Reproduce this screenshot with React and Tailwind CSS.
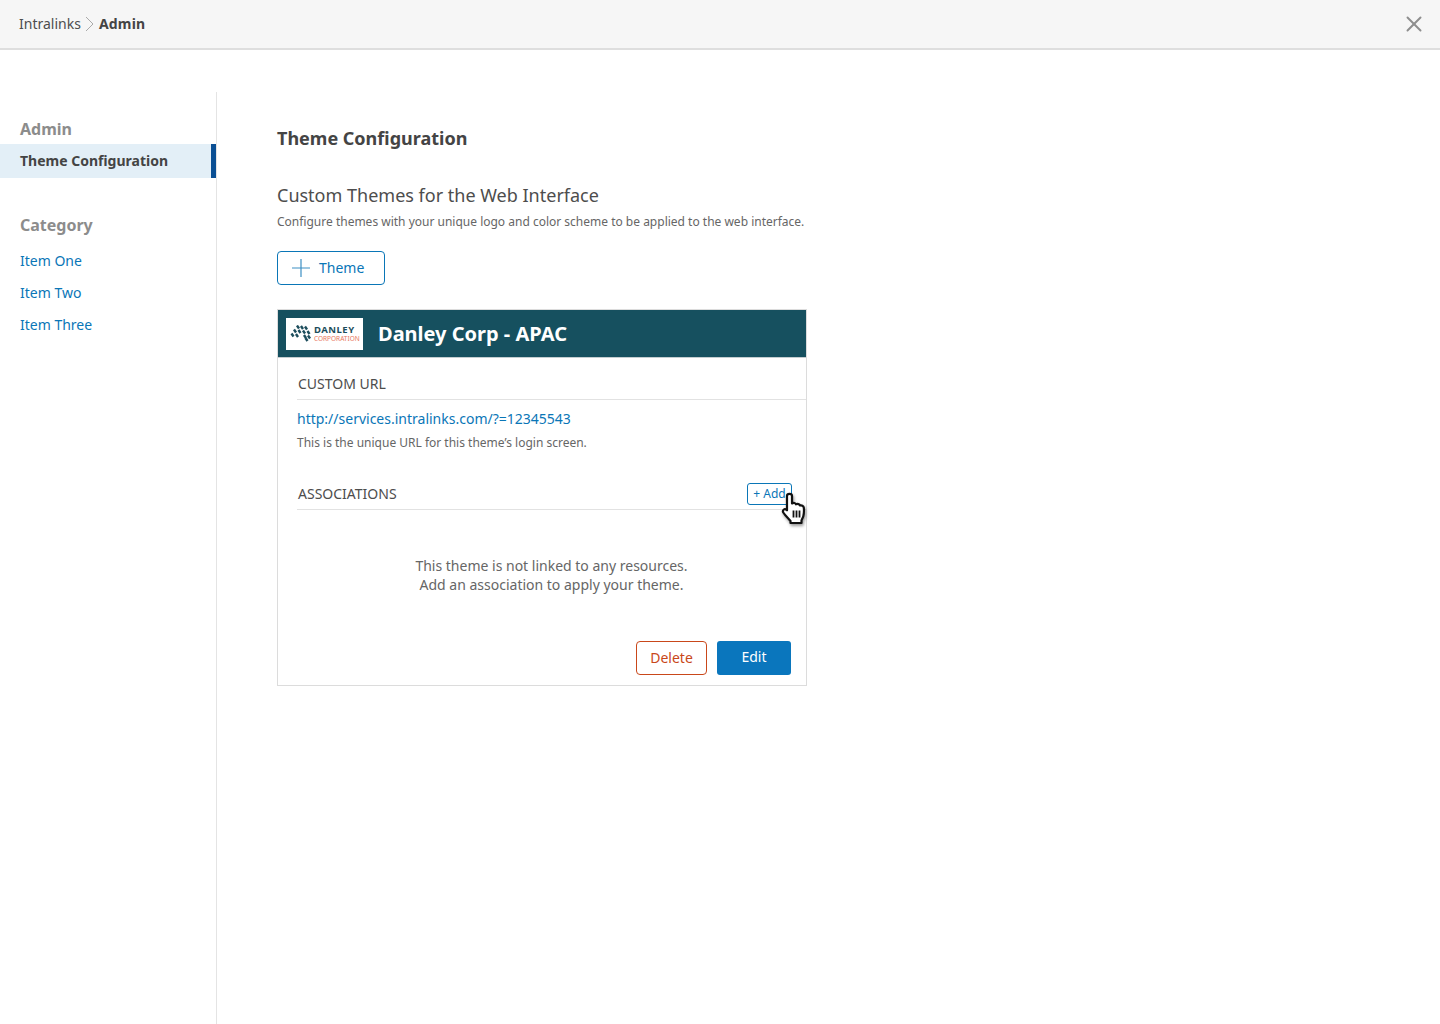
import { X } from "lucide-react";

function HandCursor() {
  return (
    <svg
      className="absolute left-[780px] top-[491px] w-[27px] h-[35px] drop-shadow-[1px_2px_1.5px_rgba(0,0,0,0.4)]"
      viewBox="0 0 27 35"
    >
      <path
        d="M7 5c0-2.800 5-2.800 5 0v7.500c1.500-1 3.500-.6 4 .8 1.500-.8 3.500-.2 4 1.200 1.600-.6 3.600.4 3.800 2.200.3 3 .2 6-.5 8.500-.4 1.500-1.300 2.800-1.800 4.300V32H10.500v-2C8 27 5.500 25 3.300 21.500c-1.300-2.200 1.200-4.300 3.200-2.700l.5.500z"
        fill="#fff"
        stroke="#111"
        strokeWidth="2.200"
        strokeLinejoin="round"
      />
      <path d="M13.500 19.500v7M16.500 19.500v7M19.500 19.500v7" stroke="#111" strokeWidth="1.800" fill="none" />
    </svg>
  );
}

function DanleyLogo() {
  const marks = [
    [8, 2], [12, 2.5], [16, 3],
    [5, 6], [9.500, 6.500], [14, 7], [18.500, 7.500],
    [2.500, 10], [7, 10.500], [15, 11.500], [19, 12],
    [16.500, 14.500],
  ];
  return (
    <div className="w-[77px] h-[32px] bg-white flex items-center pl-[4px] gap-[3px] shrink-0">
      <svg width="21" height="17" viewBox="0 0 21 17" className="shrink-0">
        {marks.map(([x, y], i) => (
          <rect
            key={i}
            x={x - 1.2}
            y={y - 1.8}
            width="2.400"
            height="3.600"
            fill="#1c4d5c"
            transform={`rotate(-35 ${x} ${y})`}
          />
        ))}
      </svg>
      <div className="flex flex-col">
        <span className="text-[9.500px] leading-[10px] font-bold tracking-[0.5px] text-[#1c4d5c]">DANLEY</span>
        <span className="text-[6.500px] leading-[8px] text-[#e8765c] whitespace-nowrap">CORPORATION</span>
      </div>
    </div>
  );
}

export default function App() {
  return (
    <div className="relative w-[1440px] h-[1024px] overflow-hidden bg-white font-['Noto_Sans',sans-serif] text-[#444] antialiased">
      {/* header */}
      <header className="h-[50px] bg-[#f6f6f6] border-b-2 border-[#dedede] flex items-center justify-between pl-[19px] pr-[13px]">
        <div className="flex items-center text-[14px] leading-[20px]">
          <span className="text-[#4d4d4d]">Intralinks</span>
          <svg width="18" height="16" viewBox="0 0 18 16">
            <path d="M5 1l7 7-7 7" fill="none" stroke="#aaa" strokeWidth="1" />
          </svg>
          <span className="font-bold tracking-[0.2px] text-[#444]">Admin</span>
        </div>
        <X size={26} strokeWidth={1.8} className="text-[#8e8e8e]" />
      </header>

      <div className="flex pt-[42px]">
        {/* sidebar */}
        <aside className="w-[217px] h-[932px] border-r border-[#e4e4e4] shrink-0">
          <h2 className="pl-[20px] pt-[26px] text-[16px] leading-[22px] font-bold text-[#8c8c8c]">Admin</h2>
          <div className="h-[34px] mt-[4px] bg-[#e3eff7] border-r-[5px] border-[#0a4f94] pl-[20px] pb-[2px] flex items-center text-[14px] font-bold text-[#444]">
            Theme Configuration
          </div>
          <h2 className="pl-[20px] mt-[36px] text-[16px] leading-[22px] font-bold text-[#8c8c8c]">Category</h2>
          <ul className="pl-[20px] mt-[15px] flex flex-col gap-[12px] text-[14px] leading-[20px] text-[#0a76b7]">
            <li>Item One</li>
            <li>Item Two</li>
            <li>Item Three</li>
          </ul>
        </aside>

        {/* main */}
        <main className="pl-[60px] pt-[33px]">
          <h1 className="text-[18px] leading-[26px] font-bold text-[#444]">Theme Configuration</h1>
          <h2 className="mt-[31px] text-[18px] leading-[26px] text-[#4d4d4d]">Custom Themes for the Web Interface</h2>
          <p className="mt-[5px] text-[12px] leading-[18px] text-[#666]">
            Configure themes with your unique logo and color scheme to be applied to the web interface.
          </p>
          <button className="mt-[20px] w-[108px] h-[34px] border border-[#0a76b7] rounded-[4px] flex items-center pl-[14px] gap-[9px] text-[14px] text-[#0a76b7]">
            <svg width="18" height="18" viewBox="0 0 18 18">
              <path d="M9 0v18M0 9h18" stroke="#3d8fc4" strokeWidth="1.200" fill="none" />
            </svg>
            <span className="mb-[2px]">Theme</span>
          </button>

          {/* theme card */}
          <section className="mt-[24px] w-[530px] h-[377px] border border-[#dcdcdc] flex flex-col">
            <div className="h-[48px] bg-[#16505f] border-b border-[#c4cdd0] flex items-center pl-[8px] gap-[15px]">
              <DanleyLogo />
              <span className="text-[20px] font-bold text-white">Danley Corp - APAC</span>
            </div>
            <div className="pl-[19px] flex-1 flex flex-col">
              <div className="mt-[16px] h-[26px] border-b border-[#e2e2e2] text-[14px] leading-[20px] text-[#4d4d4d] pl-[1px]">
                CUSTOM URL
              </div>
              <a className="mt-[9px] text-[14px] leading-[20px] text-[#0a76b7]">http://services.intralinks.com/?=12345543</a>
              <p className="mt-[5px] text-[12px] leading-[18px] text-[#666]">This is the unique URL for this theme’s login screen.</p>
              <div className="mt-[31px] h-[27px] border-b border-[#e2e2e2] flex justify-between items-start pl-[1px] text-[14px] leading-[20px] text-[#4d4d4d]">
                <span className="mt-[1px]">ASSOCIATIONS</span>
                <button className="mr-[14px] w-[45px] h-[22px] border border-[#0a76b7] rounded-[3px] text-[12px] leading-[18px] text-[#0a76b7]">
                  + Add
                </button>
              </div>
              <p className="mt-[46px] text-center text-[14px] leading-[19px] text-[#666]">
                This theme is not linked to any resources.
                <br />
                Add an association to apply your theme.
              </p>
              <div className="mt-[47px] flex justify-end gap-[10px] pr-[15px]">
                <button className="w-[71px] h-[34px] pb-[2px] border border-[#c9471a] rounded-[4px] text-[14px] text-[#c9471a]">Delete</button>
                <button className="w-[74px] h-[34px] pb-[4px] bg-[#0a76bd] rounded-[3px] text-[14px] text-white">Edit</button>
              </div>
            </div>
          </section>
        </main>
      </div>

      <HandCursor />
    </div>
  );
}
